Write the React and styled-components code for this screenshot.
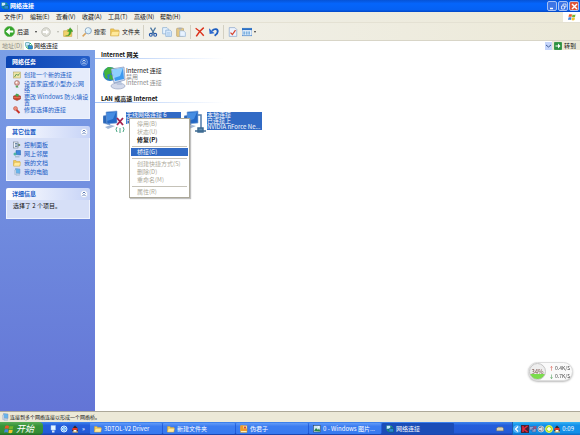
import styled, { createGlobalStyle } from "styled-components"

const menus = ["文件(F)", "编辑(E)", "查看(V)", "收藏(A)", "工具(T)", "高级(N)", "帮助(H)"]

const networkTasks = [
    { icon: "wizard", text: "创建一个新的连接" },
    { icon: "home", text: "设置家庭或小型办公网络" },
    { icon: "firewall", text: "更改 Windows 防火墙设置" },
    { icon: "repair", text: "修复选择的连接" },
]

const otherPlaces = [
    { icon: "panel", text: "控制面板" },
    { icon: "neighbors", text: "网上邻居" },
    { icon: "folder", text: "我的文档" },
    { icon: "computer", text: "我的电脑" },
]

const contextItems = [
    { text: "停用(B)", disabled: true },
    { text: "状态(U)", disabled: true },
    { text: "修复(P)", bold: true },
    null,
    { text: "桥接(G)", selected: true },
    null,
    { text: "创建快捷方式(S)", disabled: true },
    { text: "删除(D)", disabled: true },
    { text: "重命名(M)", disabled: true },
    null,
    { text: "属性(R)", disabled: true },
]

const windowTasks = [
    { icon: "folder", text: "3DTOL-V2 Driver" },
    { icon: "folder", text: "新建文件夹" },
    { icon: "note", text: "伪君子" },
    { icon: "picture", text: "0 - Windows 图片..." },
    { icon: "network", text: "网络连接", active: true },
]

const drawings = {
    network: <>
        <rect x="1" y="1" width="8" height="7" rx="1" fill="#c9eaff" stroke="#157c80" />
        <rect x="6" y="7" width="9" height="7" rx="1" fill="#2b87d8" stroke="#0d6a4c" />
        <path d="M2 9l3 4M10 2l3 3" stroke="#19b95a" strokeWidth="2" />
    </>,
    back: <>
        <circle cx="8" cy="8" r="7.500" fill="#35a52d" stroke="#78bd68" />
        <path d="M2.500 8l6-5v3.500h5v3h-5V13z" fill="#fff" />
    </>,
    forward: <>
        <circle cx="8" cy="8" r="7" fill="#dcdcd4" stroke="#b9b9b0" />
        <path d="M13 8L8 3.500v3H3v3h5v3z" fill="#fff" />
    </>,
    up: <>
        <path d="M1 6h5l1-2h7v11H1z" fill="#f2d36c" stroke="#c9a244" />
        <path d="M4 14c5 0 6-3 6-7H7l4.500-6L16 7h-3c0 5-3 8-9 7z" fill="#42a92c" stroke="#2f861c" strokeWidth=".5" />
    </>,
    search: <>
        <path d="M6 10l-5 5" stroke="#d9a45c" strokeWidth="2.500" />
        <circle cx="10" cy="6" r="5" fill="#d8effc" stroke="#8aa6c2" strokeWidth="1.500" />
        <path d="M7 6c0-2 1-3 3-3" fill="none" stroke="#fff" strokeWidth="1.500" />
    </>,
    folder: <>
        <path d="M1 3h5l1 2h7v9H1z" fill="#f3cb55" stroke="#cba03a" />
        <path d="M3 7h12l-2 7H1z" fill="#ffe99b" stroke="#d9b24c" strokeWidth=".7" />
    </>,
    cut: <>
        <path d="M4 1l6 10M12 1L6 11" stroke="#47749f" strokeWidth="1.900" />
        <circle cx="4.500" cy="12.500" r="2.300" fill="none" stroke="#2458a8" strokeWidth="1.800" />
        <circle cx="11.500" cy="12.500" r="2.300" fill="none" stroke="#2458a8" strokeWidth="1.800" />
    </>,
    copy: <>
        <path d="M1 1h7l2 2v8H1z" fill="#e6f2fe" stroke="#7ba3ce" />
        <path d="M6 5h7l2 2v8H6z" fill="#d8eafd" stroke="#7ba3ce" />
        <path d="M8 9h5M8 11h5M8 13h5" stroke="#8fb7df" strokeWidth=".8" />
    </>,
    paste: <>
        <rect x="1" y="2" width="11" height="13" rx="1" fill="#e7c983" stroke="#b59b67" />
        <rect x="4" y="1" width="5" height="3" fill="#aab0b8" />
        <path d="M6 6h6l3 3v6H6z" fill="#e8f3ff" stroke="#8babd0" />
    </>,
    remove: <path d="M1 2c5 3 9 7 13 12M14 1C9 5 5 9 2 15" fill="none" stroke="#db2f18" strokeWidth="2.300" />,
    undo: <>
        <path d="M5 6c4-4 9-3 9 1 0 3-2 5-5 7" fill="none" stroke="#1f5fc0" strokeWidth="3" />
        <path d="M0 2l1 9 8-1z" fill="#2c6ad0" />
    </>,
    properties: <>
        <path d="M2 1h9l3 3v11H2z" fill="#edf3fd" stroke="#7c9bc7" />
        <path d="M4 9l3 3 5-7" fill="none" stroke="#d74630" strokeWidth="2" />
    </>,
    views: <>
        <rect x="0" y="2" width="16" height="12" fill="#f4faff" stroke="#2b6fc3" />
        <path d="M0 3.500h16" stroke="#2b6fc3" strokeWidth="3" />
        <path d="M2 8h3m1 0h3m1 0h3M2 11h3m1 0h3m1 0h3" stroke="#5a9bd6" strokeWidth="2" />
    </>,
    flag: <>
        <path d="M2 3c2-1 4-1 6 0L7 8C5 7 3 7 1 8z" fill="#e8582b" />
        <path d="M9 3c2 1 4 1 6 0l-1 5c-2 1-4 1-6 0z" fill="#73b52d" />
        <path d="M1 9c2-1 4-1 6 0l-1 5c-2-1-4-1-6 0z" fill="#4385da" />
        <path d="M8 9c2 1 4 1 6 0l-1 5c-2 1-4 1-6 0z" fill="#f6c22c" />
    </>,
    go: <>
        <rect x="0" y="0" width="16" height="16" rx="2" fill="#2c9140" stroke="#66b36f" />
        <path d="M3 7h5V3l5 5-5 5V9H3z" fill="#fff" />
    </>,
    wizard: <>
        <rect x="1" y="2" width="14" height="12" fill="#eee5a7" stroke="#a99c55" />
        <path d="M3 12l4-6 3 3 3-4" fill="none" stroke="#619b55" strokeWidth="2" />
    </>,
    home: <>
        <circle cx="8" cy="6" r="5" fill="#dfa7a0" stroke="#8a544f" />
        <circle cx="7" cy="5" r="2" fill="#fff" />
        <path d="M5 13l4-2 2 4H6z" fill="#4ba24f" />
    </>,
    firewall: <>
        <path d="M1 6l6-2 8 2v6l-7 3-7-3z" fill="#cc4630" stroke="#8d2c20" />
        <path d="M4 5l3-4 5 2-2 5z" fill="#47a452" />
        <path d="M2 9h12" stroke="#ef9b7d" />
    </>,
    repair: <>
        <circle cx="5" cy="5" r="4" fill="#e98a79" stroke="#b54a3d" />
        <path d="M7 8l6 6" stroke="#c8352a" strokeWidth="4" />
    </>,
    panel: <>
        <rect x="1" y="2" width="9" height="12" fill="#f0f4fa" stroke="#5a6a78" />
        <path d="M4 5h5M4 8h8M4 11h5" stroke="#406a90" strokeWidth="1.500" />
        <path d="M11 5l4 3-4 3z" fill="#52783e" />
    </>,
    neighbors: <>
        <path d="M6 1h9v9l-9-1z" fill="#3e87dc" stroke="#2460a8" />
        <circle cx="4" cy="8" r="3" fill="#4db4a3" />
        <path d="M4 12h9v3H4z" fill="#a9bfd2" />
    </>,
    computer: <>
        <path d="M5 1l9 1v9l-9-1z" fill="#65b5ec" stroke="#7996c1" />
        <path d="M3 4h3v9H3zM6 12h7v3H6z" fill="#c6d5e6" stroke="#8ea7c5" strokeWidth=".6" />
    </>,
    note: <>
        <rect x="1" y="1" width="13" height="14" rx="1" fill="#fff0b5" stroke="#c68f2d" />
        <path d="M1 1h6v6h7v5H1z" fill="#f19c26" />
        <path d="M8 3h4v4H8z" fill="#d84b31" />
    </>,
    picture: <>
        <rect x="1" y="1" width="14" height="13" fill="#cfe8f3" stroke="#25384c" />
        <path d="M2 12l4-6 4 4 2-3 3 6z" fill="#278445" />
        <circle cx="11" cy="4" r="1.500" fill="#fff" />
    </>,
    monitor: <>
        <path d="M4 1h9v9H4z" fill="#e6f5ff" stroke="#9cc7f2" />
        <path d="M6 11h5v4H6z" fill="#d9e6f4" />
    </>,
    browser: <>
        <circle cx="8" cy="8" r="6" fill="#2d8eed" stroke="#dbedff" strokeWidth="2" />
        <path d="M5 8h6M11 8c0-4-6-4-6 0s4 4 6 2" fill="none" stroke="#fff" strokeWidth="1.500" />
    </>,
    penguin: <>
        <path d="M2 12l3-8 3-3 4 4 2 8z" fill="#36262b" />
        <path d="M5 7h6v7H5z" fill="#fff" />
        <path d="M3 6h10v4H3z" fill="#e53422" />
        <path d="M3 13h11v2H3z" fill="#f3b93a" />
    </>,
    disk: <>
        <path d="M1 7l3-3h9l2 3v5H1z" fill="#bfb8a1" stroke="#6b716d" />
        <path d="M2 8h12" stroke="#f9edc0" strokeWidth="2" />
    </>,
    kaspersky: <>
        <rect width="16" height="16" fill="#442338" />
        <path d="M4 2v12M13 2L5 8l8 6" fill="none" stroke="#ed2638" strokeWidth="3" />
    </>,
    offline: <>
        <path d="M1 3h8v7H1zM6 7h8v7H6z" fill="#8ba2ce" stroke="#344d91" />
        <path d="M9 2l6 6M15 2L9 8" stroke="#d6354e" strokeWidth="2" />
    </>,
    speaker: <>
        <circle cx="8" cy="8" r="6" fill="#777f91" stroke="#b8c0cf" strokeWidth="2" />
        <path d="M4 6h3l4-3v10L7 10H4z" fill="#d8dde4" />
    </>,
    shield: <>
        <circle cx="8" cy="8" r="7" fill="#a7df25" stroke="#edf35b" strokeWidth="2" />
        <path d="M8 4v8M4 8h8" stroke="#fff" strokeWidth="3" />
    </>,
    chevron: <>
        <circle cx="8" cy="8" r="7" fill="#44a8f5" stroke="#82cdfa" />
        <path d="M10 3L5 8l5 5" fill="none" stroke="#fff" strokeWidth="2.500" />
    </>,
}

function Icon({ name, size = 8 }) {
    return <svg width={size} height={size} viewBox="0 0 16 16" aria-hidden="true">{drawings[name]}</svg>
}

function ConnectionIcon({ kind }) {
    if (kind === "gateway") {
        return (
            <svg width="23" height="24" viewBox="0 0 23 24" aria-hidden="true">
                <circle cx="7" cy="8" r="7" fill="#2d7fc6" />
                <path d="M1 5l4-4 6 1-2 5-5 2 1 4-3-1zM7 8l3 2v4l-4-1z" fill="#43b43c" />
                <ellipse cx="15" cy="20" rx="7" ry="3" fill="#d3d9ea" stroke="#8c98ba" strokeWidth=".6" />
                <path d="M13 15l5-1 1 5h-5z" fill="#b9c6de" />
                <path d="M8 3l13-2 1 13-11 3z" fill="#d3e0f4" stroke="#6f85b2" strokeWidth=".6" />
                <path d="M9 4l11-2 1 11-9 2z" fill="#3d9af0" />
                <path d="M9 4l11-2-3 8-6 2z" fill="#8fd0ff" />
            </svg>
        )
    }
    return (
        <svg width="23" height="24" viewBox="0 0 23 24" aria-hidden="true">
            <path d="M0 6l7-2v11l-7-2z" fill="#2a67b8" stroke="#88a7d6" strokeWidth=".6" />
            <path d="M3 2l11-1v12L4 14z" fill="#2468c4" stroke="#83a9dc" strokeWidth=".6" />
            <path d="M4 3l9-1-3 7-6 2z" fill="#468de2" />
            <path d="M2 17l6-2 4 1-7 3z" fill="#a3b8d6" />
            {kind === "wireless" ? <>
                <path d="M14 8l6 7M20 8l-6 7" stroke="#a3214d" strokeWidth="1.800" />
                <path d="M17 18v5M14 17q-2 2 0 5M20 17q2 2 0 5" fill="none" stroke="#4ba785" />
            </> : <>
                <path d="M14 5h3v14" fill="none" stroke="#507baa" strokeWidth="1.500" />
                <path d="M11 21h11M14 18h5v4h-5z" fill="#5f8cae" stroke="#3e6b92" strokeWidth="1.500" />
            </>}
        </svg>
    )
}

function TaskPanel({ title, primary, items, children }) {
    return (
        <Panel>
            <PanelHeader $primary={primary}>
                <h2>{title}</h2>
                <CollapseButton aria-label={"折叠 " + title}>
                    <svg width="8" height="8" viewBox="0 0 16 16">
                        <circle cx="8" cy="8" r="7" fill={primary ? "#396fcf" : "#fff"} stroke={primary ? "#9ebdf0" : "#bac9e9"} />
                        <path d="M5 7l3-3 3 3M5 12l3-3 3 3" fill="none" stroke={primary ? "#fff" : "#244c9d"} strokeWidth="1.500" />
                    </svg>
                </CollapseButton>
            </PanelHeader>
            <PanelBody $primary={primary}>
                {items && items.map(item =>
                    <TaskLink href="#" key={item.text}>
                        <Icon name={item.icon} />
                        <span>{item.text}</span>
                    </TaskLink>
                )}
                {children}
            </PanelBody>
        </Panel>
    )
}

export default function App() {
    return (
        <Desktop>
            <GlobalStyle />
            <TitleBar>
                <Icon name="network" />
                <h1>网络连接</h1>
                <WindowButton aria-label="最小化">
                    <svg width="7" height="7" viewBox="0 0 7 7"><path d="M1 5.500h3" stroke="#fff" strokeWidth="1.500" /></svg>
                </WindowButton>
                <WindowButton aria-label="还原">
                    <svg width="7" height="7" viewBox="0 0 7 7"><path d="M1.500 3h3v3h-3zM3 3V1h3v3H5" fill="none" stroke="#fff" strokeWidth=".7" /></svg>
                </WindowButton>
                <WindowButton $close aria-label="关闭">
                    <svg width="7" height="7" viewBox="0 0 7 7"><path d="M1 1l5 5M6 1L1 6" stroke="#fff" strokeWidth="1.500" /></svg>
                </WindowButton>
            </TitleBar>

            <MenuBar>
                {menus.map(menu => <MenuButton key={menu}>{menu}</MenuButton>)}
                <FlagBox><Icon name="flag" /></FlagBox>
            </MenuBar>

            <Toolbar>
                <ToolButton $width={33}><Icon name="back" size={11} />后退<Arrow /></ToolButton>
                <ToolButton $width={18} aria-label="前进"><Icon name="forward" size={10} /><Arrow $muted /></ToolButton>
                <ToolButton $width={10} aria-label="向上"><Icon name="up" size={10} /></ToolButton>
                <Divider />
                <ToolButton $width={24}><Icon name="search" size={10} />搜索</ToolButton>
                <ToolButton $width={29}><Icon name="folder" size={10} />文件夹</ToolButton>
                <Divider />
                <ToolButton $width={10} aria-label="剪切"><Icon name="cut" size={10} /></ToolButton>
                <ToolButton $width={10} aria-label="复制"><Icon name="copy" size={10} /></ToolButton>
                <ToolButton $width={10} aria-label="粘贴"><Icon name="paste" size={10} /></ToolButton>
                <Divider />
                <ToolButton $width={10} aria-label="删除"><Icon name="remove" size={10} /></ToolButton>
                <ToolButton $width={10} aria-label="撤销"><Icon name="undo" size={10} /></ToolButton>
                <Divider />
                <ToolButton $width={10} aria-label="属性"><Icon name="properties" size={10} /></ToolButton>
                <ToolButton $width={14} aria-label="查看"><Icon name="views" size={10} /><Arrow /></ToolButton>
            </Toolbar>

            <AddressBar>
                <label htmlFor="address">地址(D)</label>
                <AddressBox>
                    <Icon name="network" />
                    <input id="address" defaultValue="网络连接" />
                    <DropButton aria-label="展开地址">
                        <svg width="5" height="4" viewBox="0 0 5 4"><path d="M0 1l2.500 2L5 1" fill="none" stroke="#405f96" /></svg>
                    </DropButton>
                </AddressBox>
                <GoButton><Icon name="go" />转到</GoButton>
            </AddressBar>

            <Main>
                <Sidebar>
                    <TaskPanel title="网络任务" primary items={networkTasks} />
                    <TaskPanel title="其它位置" items={otherPlaces} />
                    <TaskPanel title="详细信息"><Details>选择了 2 个项目。</Details></TaskPanel>
                </Sidebar>
                <Content>
                    <GroupTitle>Internet 网关</GroupTitle>
                    <Connections>
                        <Connection>
                            <ConnectionIcon kind="gateway" />
                            <ConnectionText>
                                <strong>Internet 连接</strong>
                                <span>禁用</span>
                                <span>Internet 连接</span>
                            </ConnectionText>
                        </Connection>
                    </Connections>
                    <GroupTitle>LAN 或高速 Internet</GroupTitle>
                    <Connections>
                        <Connection>
                            <ConnectionIcon kind="wireless" />
                            <ConnectionText $selected>
                                <span>无线网络连接 6</span>
                                <span>已禁用</span>
                            </ConnectionText>
                            <ContextMenu role="menu">
                                {contextItems.map((item, i) => item
                                    ? <ContextItem role="menuitem" key={i} disabled={item.disabled} $bold={item.bold} $selected={item.selected}>{item.text}</ContextItem>
                                    : <Separator key={i} />
                                )}
                            </ContextMenu>
                        </Connection>
                        <Connection>
                            <ConnectionIcon kind="lan" />
                            <ConnectionText $selected>
                                <span>本地连接</span>
                                <span>已连接上</span>
                                <span>NVIDIA nForce Ne...</span>
                            </ConnectionText>
                        </Connection>
                    </Connections>
                </Content>
            </Main>

            <StatusBar><Icon name="computer" />连接到多个网络连接以形成一个网络桥。</StatusBar>

            <Taskbar>
                <StartButton><Icon name="flag" size={10} />开始</StartButton>
                <QuickLaunch>
                    <Icon name="monitor" />
                    <Icon name="browser" />
                    <Icon name="penguin" />
                    <span>»</span>
                </QuickLaunch>
                <WindowTasks>
                    {windowTasks.map(task =>
                        <TaskButton key={task.text} $active={task.active}>
                            <Icon name={task.icon} />
                            <span>{task.text}</span>
                        </TaskButton>
                    )}
                </WindowTasks>
                <Icon name="disk" />
                <Tray>
                    <Icon name="chevron" />
                    <Icon name="kaspersky" />
                    <Icon name="offline" />
                    <Icon name="speaker" />
                    <Icon name="shield" />
                    <Icon name="penguin" />
                    <time>0:09</time>
                </Tray>
            </Taskbar>

            <SpeedWidget>
                <MemoryBall>34%</MemoryBall>
                <div>
                    <Speed $color="#d65a4d"><b>↑</b>0.4K/S</Speed>
                    <Speed $color="#4c9c56"><b>↓</b>0.7K/S</Speed>
                </div>
            </SpeedWidget>
        </Desktop>
    )
}

const GlobalStyle = createGlobalStyle`
    * {
        box-sizing: border-box;
    }
    body {
        margin: 0;
        font-family: "Noto Sans CJK SC", sans-serif;
        font-size: 6px;
        line-height: 6px;
        color: #111;
    }
    button, input {
        font: inherit;
        color: inherit;
        border: 0;
        padding: 0;
        margin: 0;
        background: none;
    }
    h1, h2, p {
        margin: 0;
        font-size: 6px;
    }
    svg {
        display: block;
        flex-shrink: 0;
    }
`
const Desktop = styled.div`
    min-height: 100vh;
    display: flex;
    flex-direction: column;
`
const TitleBar = styled.header`
    height: 12px;
    display: flex;
    align-items: center;
    gap: 1px;
    padding: 0 1px;
    color: #fff;
    background: linear-gradient(#0753d5, #0565fb 30%, #0561f3 80%, #0246c4);
    h1 {
        flex: 1;
    }
`
const WindowButton = styled.button`
    width: 10px;
    height: 10px;
    display: flex;
    align-items: center;
    justify-content: center;
    border: 1px solid #a4c0f5;
    border-radius: 2px;
    background: ${props => props.$close ? "#e0563a" : "#3d75e6"};
`
const MenuBar = styled.nav`
    height: 10px;
    display: flex;
    padding-left: 4px;
    background: linear-gradient(90deg, #f1f1ed, #ece9d8);
`
const MenuButton = styled.button`
    width: 26px;
    text-align: left;
    white-space: nowrap;
`
const FlagBox = styled.div`
    width: 17px;
    margin-left: auto;
    display: flex;
    align-items: center;
    justify-content: center;
    background: #fff;
`
const Toolbar = styled.div`
    height: 18px;
    display: flex;
    align-items: center;
    gap: 4px;
    padding: 0 4px;
    border-top: 1px solid #e4e1d3;
    background: linear-gradient(90deg, #f3f3ef, #ece9d8);
`
const ToolButton = styled.button`
    width: ${props => props.$width}px;
    display: flex;
    align-items: center;
    gap: 2px;
    white-space: nowrap;
`
const Arrow = styled.i`
    margin-left: auto;
    border: 1px solid transparent;
    border-top: 2px solid ${props => props.$muted ? "#b5b5ac" : "#333"};
    border-bottom: 0;
`
const Divider = styled.i`
    width: 1px;
    height: 14px;
    background: #d3d0c2;
`
const AddressBar = styled.div`
    height: 10px;
    display: flex;
    align-items: center;
    gap: 2px;
    padding: 0 2px;
    border-top: 1px solid #d8d5c7;
    background: #ece9d8;
    label {
        width: 20px;
        white-space: nowrap;
        color: #929087;
    }
`
const AddressBox = styled.div`
    flex: 1;
    height: 9px;
    display: flex;
    align-items: center;
    gap: 1px;
    padding-left: 1px;
    background: #fff;
    input {
        flex: 1;
        min-width: 0;
        height: 8px;
    }
`
const DropButton = styled.button`
    width: 7px;
    height: 8px;
    display: flex;
    align-items: center;
    justify-content: center;
    background: #c5d5fb;
`
const GoButton = styled.button`
    width: 24px;
    display: flex;
    align-items: center;
    gap: 2px;
    white-space: nowrap;
`
const Main = styled.main`
    flex: 1;
    display: flex;
`
const Sidebar = styled.aside`
    width: 95px;
    padding: 6px 5px 5px 6px;
    display: flex;
    flex-direction: column;
    gap: 7px;
    background: linear-gradient(#7b9fe6, #6375d6);
`
const Panel = styled.section`
    border-radius: 2px 2px 0 0;
    overflow: hidden;
`
const PanelHeader = styled.div`
    height: 12px;
    display: flex;
    align-items: center;
    justify-content: space-between;
    padding: 0 2px 0 6px;
    color: ${props => props.$primary ? "#fff" : "#215dc6"};
    background: ${props => props.$primary ? "linear-gradient(90deg, #0b45b3, #225cc8)" : "linear-gradient(90deg, #fff, #c6d3f7)"};
`
const CollapseButton = styled.button`
    width: 8px;
    height: 8px;
`
const PanelBody = styled.div`
    display: flex;
    flex-direction: column;
    padding: 3px 0 3px 6px;
    border: 1px solid #eef2fd;
    border-top: 0;
    background: ${props => props.$primary ? "#e6ecfb" : "#d6dff7"};
`
const TaskLink = styled.a`
    min-height: 9px;
    display: flex;
    gap: 3px;
    color: #215dc6;
    text-decoration: none;
    span {
        padding-top: 1px;
    }
`
const Details = styled.p`
    padding-bottom: 6px;
    white-space: nowrap;
`
const Content = styled.section`
    flex: 1;
    padding-top: 1px;
    background: #fff;
`
const GroupTitle = styled.h2`
    height: 8px;
    padding-left: 6px;
    line-height: 7px;
    border-bottom: 1px solid;
    border-image: linear-gradient(90deg, #a3c2f5, #fff 130px) 1;
`
const Connections = styled.div`
    display: grid;
    grid-template-columns: repeat(auto-fill, 81px);
    padding: 7px 8px 5px;
`
const Connection = styled.article`
    position: relative;
    min-height: 24px;
    display: flex;
    align-items: flex-start;
`
const ConnectionText = styled.div`
    width: 55px;
    display: flex;
    flex-direction: column;
    white-space: nowrap;
    margin-top: 2px;
    color: ${props => props.$selected ? "#fff" : "#8a8a8a"};
    background: ${props => props.$selected ? "#316ac5" : "transparent"};
    strong {
        font-weight: 400;
        color: #111;
    }
`
const ContextMenu = styled.div`
    position: absolute;
    z-index: 2;
    top: 8px;
    left: 26px;
    width: 61px;
    padding: 1px;
    display: flex;
    flex-direction: column;
    border: 1px solid #aca899;
    background: #fff;
    box-shadow: 1px 1px 1px #8888;
`
const ContextItem = styled.button`
    height: 8px;
    padding-left: 6px;
    text-align: left;
    white-space: nowrap;
    font-weight: ${props => props.$bold ? 700 : 400};
    color: ${props => props.$selected ? "#fff" : props.disabled ? "#aca899" : "#111"};
    background: ${props => props.$selected ? "#316ac5" : "transparent"};
`
const Separator = styled.i`
    height: 1px;
    margin: 2px 1px 1px;
    background: #c5c2b8;
`
const StatusBar = styled.footer`
    height: 11px;
    display: flex;
    align-items: center;
    gap: 1px;
    padding-left: 1px;
    border-top: 1px solid #aca899;
    font-size: 5px;
    background: #ece9d8;
`
const Taskbar = styled.footer`
    height: 13px;
    display: flex;
    align-items: center;
    color: #fff;
    background: linear-gradient(#3f86ee, #245edb 25%, #235bd8 80%, #1941a5);
`
const StartButton = styled.button`
    width: 43px;
    height: 13px;
    display: flex;
    align-items: center;
    gap: 2px;
    padding-left: 4px;
    border-radius: 0 4px 4px 0;
    font-size: 9px;
    font-style: italic;
    line-height: 12px;
    white-space: nowrap;
    background: linear-gradient(#58ad58, #389338 30%, #348d34 80%, #246c25);
`
const QuickLaunch = styled.div`
    width: 47px;
    display: flex;
    align-items: center;
    gap: 3px;
    padding-left: 6px;
`
const WindowTasks = styled.div`
    flex: 1;
    display: flex;
    gap: 1px;
    min-width: 0;
`
const TaskButton = styled.button`
    flex: 0 1 72px;
    min-width: 0;
    height: 11px;
    display: flex;
    align-items: center;
    gap: 2px;
    padding-left: 4px;
    border-radius: 1px;
    white-space: nowrap;
    background: ${props => props.$active ? "#1b4db7" : "linear-gradient(#629bf8, #3c7df0 30%, #377af0)"};
`
const Tray = styled.div`
    width: 68px;
    height: 13px;
    margin-left: 8px;
    display: flex;
    align-items: center;
    border-left: 1px solid #1b5cb0;
    background: linear-gradient(#36b4f5, #1290e9 25%, #1290e9 80%, #0d6bc5);
    time {
        margin-left: auto;
        padding-right: 6px;
    }
`
const SpeedWidget = styled.aside`
    position: fixed;
    right: 7px;
    bottom: 54px;
    width: 45px;
    height: 19px;
    display: flex;
    align-items: center;
    gap: 3px;
    border: 1px solid #ddd;
    border-radius: 10px;
    background: #fafafa;
    box-shadow: 0 1px 2px #bbb;
`
const MemoryBall = styled.div`
    width: 17px;
    height: 17px;
    display: flex;
    align-items: center;
    justify-content: center;
    flex-shrink: 0;
    border: 1px solid #c5c5c5;
    border-radius: 50%;
    color: #754d45;
    background: linear-gradient(#eee 64%, #7bdc4c 64%);
`
const Speed = styled.div`
    display: flex;
    gap: 2px;
    height: 8px;
    align-items: center;
    font-size: 5px;
    color: #444;
    b {
        width: 4px;
        color: ${props => props.$color};
    }
`
